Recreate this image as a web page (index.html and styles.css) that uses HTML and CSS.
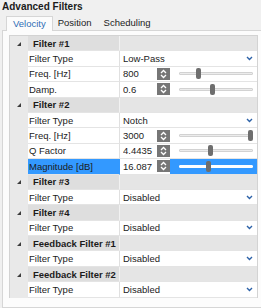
FILE: index.html
```html
<!DOCTYPE html>
<html lang="en">
<head>
  <meta charset="UTF-8" />
  <title>Advanced Filters</title>
  <link rel="stylesheet" href="styles.css">
</head>
<body>
  <div class="title">Advanced Filters</div>
  <div class="tabs">
    <div class="tab active">Velocity</div>
    <div class="tab">Position</div>
    <div class="tab">Scheduling</div>
  </div>
  <div class="panel">
    <div class="grid">
      <!-- Filter #1 -->
      <div class="row head">
        <div class="exp"><svg width="4" height="4" viewBox="0 0 4 4"><polygon points="4,0 4,4 0,4" fill="#3c3c3c"/></svg></div>
        <div class="label">Filter #1</div>
        <div class="value"></div>
      </div>
      <div class="row">
        <div class="exp"></div>
        <div class="label">Filter Type</div>
        <div class="value combo"><span>Low-Pass</span><svg class="chev" width="7" height="5" viewBox="0 0 7 5"><polyline points="1,1 3.5,3.5 6,1" fill="none" stroke="#2d62a8" stroke-width="1.4"/></svg></div>
      </div>
      <div class="row">
        <div class="exp"></div>
        <div class="label">Freq. [Hz]</div>
        <div class="value spin-row">
          <span class="num">800</span>
          <span class="spin"><svg width="13" height="12" viewBox="0 0 13 12"><polyline points="4,5 6.5,2.5 9,5" fill="none" stroke="#fff" stroke-width="1.3"/><polyline points="4,7 6.5,9.5 9,7" fill="none" stroke="#fff" stroke-width="1.3"/></svg></span>
          <span class="slider"><span class="track"></span><span class="thumb" style="--p: 0.25"></span></span>
        </div>
      </div>
      <div class="row">
        <div class="exp"></div>
        <div class="label">Damp.</div>
        <div class="value spin-row">
          <span class="num">0.6</span>
          <span class="spin"><svg width="13" height="12" viewBox="0 0 13 12"><polyline points="4,5 6.5,2.5 9,5" fill="none" stroke="#fff" stroke-width="1.3"/><polyline points="4,7 6.5,9.5 9,7" fill="none" stroke="#fff" stroke-width="1.3"/></svg></span>
          <span class="slider"><span class="track"></span><span class="thumb" style="--p: 0.45"></span></span>
        </div>
      </div>
      <!-- Filter #2 -->
      <div class="row head">
        <div class="exp"><svg width="4" height="4" viewBox="0 0 4 4"><polygon points="4,0 4,4 0,4" fill="#3c3c3c"/></svg></div>
        <div class="label">Filter #2</div>
        <div class="value"></div>
      </div>
      <div class="row">
        <div class="exp"></div>
        <div class="label">Filter Type</div>
        <div class="value combo"><span>Notch</span><svg class="chev" width="7" height="5" viewBox="0 0 7 5"><polyline points="1,1 3.5,3.5 6,1" fill="none" stroke="#2d62a8" stroke-width="1.4"/></svg></div>
      </div>
      <div class="row">
        <div class="exp"></div>
        <div class="label">Freq. [Hz]</div>
        <div class="value spin-row">
          <span class="num">3000</span>
          <span class="spin"><svg width="13" height="12" viewBox="0 0 13 12"><polyline points="4,5 6.5,2.5 9,5" fill="none" stroke="#fff" stroke-width="1.3"/><polyline points="4,7 6.5,9.5 9,7" fill="none" stroke="#fff" stroke-width="1.3"/></svg></span>
          <span class="slider"><span class="track"></span><span class="thumb" style="--p: 1"></span></span>
        </div>
      </div>
      <div class="row">
        <div class="exp"></div>
        <div class="label">Q Factor</div>
        <div class="value spin-row">
          <span class="num">4.4435</span>
          <span class="spin"><svg width="13" height="12" viewBox="0 0 13 12"><polyline points="4,5 6.5,2.5 9,5" fill="none" stroke="#fff" stroke-width="1.3"/><polyline points="4,7 6.5,9.5 9,7" fill="none" stroke="#fff" stroke-width="1.3"/></svg></span>
          <span class="slider"><span class="track"></span><span class="thumb" style="--p: 0.42"></span></span>
        </div>
      </div>
      <div class="row selected">
        <div class="exp"></div>
        <div class="label">Magnitude [dB]</div>
        <div class="value spin-row">
          <span class="num">16.087</span>
          <span class="spin"><svg width="13" height="12" viewBox="0 0 13 12"><polyline points="4,5 6.5,2.5 9,5" fill="none" stroke="#fff" stroke-width="1.3"/><polyline points="4,7 6.5,9.5 9,7" fill="none" stroke="#fff" stroke-width="1.3"/></svg></span>
          <span class="slider"><span class="track"></span><span class="thumb" style="--p: 0.39"></span></span>
        </div>
      </div>
      <!-- Filter #3 -->
      <div class="row head">
        <div class="exp"><svg width="4" height="4" viewBox="0 0 4 4"><polygon points="4,0 4,4 0,4" fill="#3c3c3c"/></svg></div>
        <div class="label">Filter #3</div>
        <div class="value"></div>
      </div>
      <div class="row">
        <div class="exp"></div>
        <div class="label">Filter Type</div>
        <div class="value combo"><span>Disabled</span><svg class="chev" width="7" height="5" viewBox="0 0 7 5"><polyline points="1,1 3.5,3.5 6,1" fill="none" stroke="#2d62a8" stroke-width="1.4"/></svg></div>
      </div>
      <!-- Filter #4 -->
      <div class="row head">
        <div class="exp"><svg width="4" height="4" viewBox="0 0 4 4"><polygon points="4,0 4,4 0,4" fill="#3c3c3c"/></svg></div>
        <div class="label">Filter #4</div>
        <div class="value"></div>
      </div>
      <div class="row">
        <div class="exp"></div>
        <div class="label">Filter Type</div>
        <div class="value combo"><span>Disabled</span><svg class="chev" width="7" height="5" viewBox="0 0 7 5"><polyline points="1,1 3.5,3.5 6,1" fill="none" stroke="#2d62a8" stroke-width="1.4"/></svg></div>
      </div>
      <!-- Feedback Filter #1 -->
      <div class="row head">
        <div class="exp"><svg width="4" height="4" viewBox="0 0 4 4"><polygon points="4,0 4,4 0,4" fill="#3c3c3c"/></svg></div>
        <div class="label">Feedback Filter #1</div>
        <div class="value"></div>
      </div>
      <div class="row">
        <div class="exp"></div>
        <div class="label">Filter Type</div>
        <div class="value combo"><span>Disabled</span><svg class="chev" width="7" height="5" viewBox="0 0 7 5"><polyline points="1,1 3.5,3.5 6,1" fill="none" stroke="#2d62a8" stroke-width="1.4"/></svg></div>
      </div>
      <!-- Feedback Filter #2 -->
      <div class="row head">
        <div class="exp"><svg width="4" height="4" viewBox="0 0 4 4"><polygon points="4,0 4,4 0,4" fill="#3c3c3c"/></svg></div>
        <div class="label">Feedback Filter #2</div>
        <div class="value"></div>
      </div>
      <div class="row">
        <div class="exp"></div>
        <div class="label">Filter Type</div>
        <div class="value combo"><span>Disabled</span><svg class="chev" width="7" height="5" viewBox="0 0 7 5"><polyline points="1,1 3.5,3.5 6,1" fill="none" stroke="#2d62a8" stroke-width="1.4"/></svg></div>
      </div>
    </div>
  </div>
</body>
</html>
```

FILE: styles.css
```css
* { box-sizing: border-box; }
html, body {
  height: 100%;
  margin: 0;
  font-family: 'Liberation Sans', Arial, sans-serif;
  font-size: 9.5px;
  color: #1b1b1b;
  background-color: #f0f0f0;
  overflow: hidden;
}
body { display: flex; flex-direction: column; }

.title {
  height: 16px;
  line-height: 13px;
  padding-left: 2px;
  font-size: 10px;
  font-weight: bold;
}

/* tab strip sits on the panel's top border */
.tabs {
  display: flex;
  height: 14px;
  padding-left: 6px;
}
.tab {
  line-height: 14px;
  padding: 0 6px 0 5px;
}
.tab.active {
  padding: 0 6px 0 6px;
  color: #2f6db5;
  background-color: #fcfcfc;
  border: 1px solid #d6d6d6;
  border-bottom: none;
  height: 15px;
  position: relative;
  z-index: 1;
  line-height: 13px;
}
.tab + .tab { padding-left: 5px; padding-right: 7px; }

.panel {
  flex: 1;
  margin-left: 2px;
  border: 1px solid #d6d6d6;
  border-right: none;
  background-color: #fcfcfc;
  padding: 4px 0 0 6px;
}

.grid {
  width: 249px;
  border: 1px solid #d3d3d3;
  border-bottom: none;
}
.row {
  display: grid;
  grid-template-columns: 18px 92px 137px;
  height: 15.4px;
}
.exp {
  background-color: #e9e9e9;
  display: flex;
  align-items: center;
  justify-content: flex-end;
  padding-right: 7px;
}
.label, .value {
  border-bottom: 1px solid #e4e4e4;
  background-color: #ffffff;
  display: flex;
  align-items: center;
  white-space: nowrap;
}
.label {
  padding-left: 1px;
  border-right: 1px solid #e0e0e0;
}
.value { padding-left: 3px; }

.head .label {
  background-color: #dedede;
  font-weight: bold;
  padding-left: 5px;
  border-right-color: #f2f2f2;
}
.head .value { background-color: #e5e5e5; }

.combo {
  justify-content: space-between;
  padding-right: 4px;
}

.spin-row { padding-right: 4px; }
.num {
  width: 34px;
  overflow: hidden;
}
.spin {
  width: 13px;
  height: 12px;
  background-color: #767676;
  display: flex;
}
.slider {
  position: relative;
  flex: 1;
  margin-left: 9px;
  height: 11px;
  display: flex;
  align-items: center;
}
.track {
  width: 100%;
  height: 3px;
  background-color: #ececec;
  border: 1px solid #d2d2d2;
  border-radius: 1px;
}
.thumb {
  position: absolute;
  top: 0;
  left: calc(var(--p) * (100% - 5px));
  width: 5px;
  height: 11px;
  background-color: #6e6e6e;
  border-radius: 2px;
}

.selected .label { background-color: #3399ff; border-right-color: #3399ff; }
.selected .spin-row { background: linear-gradient(to right, #fff 0, #fff 50px, #3399ff 50px); }
.selected .num { background-color: #fff; }
.selected .track { background-color: #fff; border-color: #fff; }
```
